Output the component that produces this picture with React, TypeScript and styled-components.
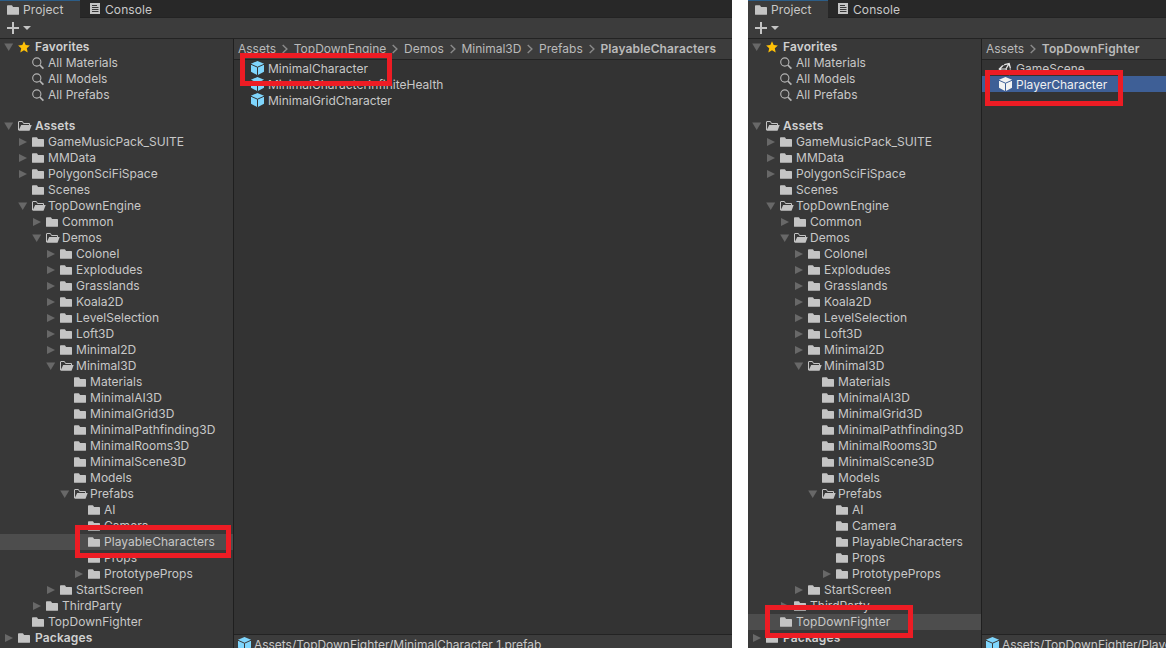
import React from 'react';
import styled, { createGlobalStyle, css } from 'styled-components';
import { FaUnity } from 'react-icons/fa';

const GlobalStyle = createGlobalStyle`
  * { box-sizing: border-box; }
  html, body { margin: 0; background: #fff; overflow: hidden; }
`;

const Page = styled.div`
  display: flex;
  gap: 16px;
  width: 1166px;
  height: 648px;
  overflow: hidden;
  background: #fff;
  color: #c8c8c8;
  font: 400 12px/16px Inter, 'Liberation Sans', sans-serif;
  letter-spacing: 0.04px;
  white-space: nowrap;
`;

const EditorWindow = styled.section<{ $width: number }>`
  position: relative;
  display: flex;
  flex-direction: column;
  flex: none;
  width: ${(p) => p.$width}px;
  height: 648px;
  overflow: hidden;
  background: #383838;
`;

const TabBar = styled.nav`
  display: flex;
  flex: none;
  height: 18px;
  background: #282828;
  border-bottom: 1px solid #232323;
  letter-spacing: 0.1px;
`;

const Tab = styled.div<{ $active?: boolean }>`
  display: flex;
  align-items: center;
  gap: 4px;
  height: 18px;
  padding-top: 2px;
  ${(p) =>
    p.$active
      ? css`
          width: 80px;
          padding-left: 7px;
          background: #3c3c3c;
          box-shadow: inset 0 1px #2c5d87;
        `
      : css`
          padding-left: 10px;
        `}
`;

const Toolbar = styled.div`
  display: flex;
  align-items: center;
  flex: none;
  height: 21px;
  padding: 0 0 0 7px;
  gap: 4px;
  background: #3c3c3c;
  border-bottom: 1px solid #232323;
`;

const Body = styled.div`
  display: flex;
  flex: 1;
  min-height: 0;
`;

const Tree = styled.div`
  flex: none;
  width: 234px;
  overflow: hidden;
  background: #383838;
  border-right: 1px solid #1f1f1f;
`;

const TreeGroup = styled.div`
  & + & { margin-top: 15px; }
`;

const TreeRow = styled.div<{ $depth: number; $selected?: boolean; $bold?: boolean }>`
  display: flex;
  align-items: center;
  height: 16px;
  padding-left: ${(p) => 4 + p.$depth * 14}px;
  background: ${(p) => (p.$selected ? '#4d4d4d' : 'transparent')};
  ${(p) =>
    p.$bold &&
    css`
      font-weight: 600;
      letter-spacing: 0.12px;
      color: #d0d0d0;
    `}
`;

const ArrowSlot = styled.span`
  display: flex;
  width: 14px;
`;

const IconSlot = styled.span<{ $wide?: boolean }>`
  display: flex;
  width: ${(p) => (p.$wide ? 17 : 16)}px;
`;

const Content = styled.main`
  display: flex;
  flex-direction: column;
  flex: 1;
  min-width: 0;
  background: #333333;
`;

const Breadcrumbs = styled.div`
  display: flex;
  align-items: center;
  flex: none;
  height: 21px;
  padding-left: 4px;
  background: #3c3c3c;
  border-bottom: 1px solid #232323;
  color: #bababa;
  letter-spacing: 0;
`;

const Crumb = styled.span<{ $current?: boolean }>`
  ${(p) =>
    p.$current &&
    css`
      font-weight: 600;
      letter-spacing: 0.13px;
    `}
`;

const CrumbArrow = styled.span`
  display: flex;
  justify-content: center;
  width: 17.7px;
`;

const FileList = styled.div`
  flex: 1;
  min-height: 0;
`;

const FileRow = styled.div<{ $selected?: boolean }>`
  display: flex;
  align-items: center;
  height: 16px;
  padding: 1px 0 0 16px;
  gap: 3px;
  letter-spacing: 0;
  color: ${(p) => (p.$selected ? '#f0f0f0' : '#c8c8c8')};
  background: ${(p) => (p.$selected ? '#3e5f96' : 'transparent')};
`;

const FileName = styled.span`
  padding-top: 1px;
`;

const StatusBar = styled.footer`
  display: flex;
  align-items: flex-start;
  flex: none;
  height: 14px;
  padding: 2px 0 0 3px;
  gap: 2px;
  overflow: hidden;
  background: #3c3c3c;
  border-top: 1px solid #232323;
  letter-spacing: -0.03px;
`;

const Highlight = styled.div<{ $x: number; $y: number; $w: number; $h: number }>`
  position: absolute;
  left: ${(p) => p.$x}px;
  top: ${(p) => p.$y}px;
  width: ${(p) => p.$w}px;
  height: ${(p) => p.$h}px;
  border: 5px solid #ed1c24;
`;

const Glyph = styled.svg`
  display: block;
  flex: none;
`;

const ConsoleGlyph = styled(Glyph)`
  margin: 0 1px 3px 0;
`;

const SceneGlyph = styled(FaUnity)`
  flex: none;
  width: 15px;
  height: 14px;
  color: #e4e4e4;
`;

const FolderIcon = () => (
  <Glyph width="12" height="10" viewBox="0 0 12 10" fill="#c4c4c4">
    <path d="M0 1Q0 .3.8.3H4.6Q5.2.3 5.5.9L6 2H11.3Q12 2 12 2.7V9.2Q12 9.8 11.3 9.8H.7Q0 9.8 0 9.2Z" />
  </Glyph>
);

const OpenFolderIcon = () => (
  <Glyph width="14" height="10" viewBox="0 0 14 10" fill="none">
    <path d="M.5 9V.9Q.5.5 1 .5H4.4L5.5 2.5H11.5V4" stroke="#c4c4c4" />
    <path d="M3.2 4H13.7L11.5 9.8H.4Z" fill="#c4c4c4" />
  </Glyph>
);

const Foldout = ({ open }: { open?: boolean }) => (
  <Glyph width="10" height="10" viewBox="0 0 10 10" fill="#686868">
    <path d={open ? 'M.2 1.5H9.2L4.7 9Z' : 'M1 1V9L9 5Z'} />
  </Glyph>
);

const StarIcon = () => (
  <Glyph width="12" height="12" viewBox="0 0 12 12" fill="#ffc107">
    <path d="M6 .2L7.7 4.1L11.9 4.5L8.8 7.3L9.7 11.5L6 9.3L2.3 11.5L3.2 7.3L.1 4.5L4.3 4.1Z" />
  </Glyph>
);

const SearchIcon = () => (
  <Glyph width="13" height="13" viewBox="0 0 13 13" fill="none" stroke="#b4b4b4">
    <circle cx="4.8" cy="5" r="4.1" strokeWidth="1.1" />
    <path d="M7.8 8L11.4 11.6" strokeWidth="1.7" />
  </Glyph>
);

const ConsoleIcon = () => (
  <ConsoleGlyph width="10" height="11" viewBox="0 0 10 11">
    <path d="M0 0H10V11H0Z" fill="#c4c4c4" />
    <path d="M2 2.5H7M2 4.5H8.5M2 6.5H8.5M2 8.5H8.5" stroke="#383838" />
  </ConsoleGlyph>
);

const PlusIcon = () => (
  <Glyph width="12" height="12" viewBox="0 0 12 12" stroke="#c4c4c4" strokeWidth="2">
    <path d="M6 0V12M0 6H12" />
  </Glyph>
);

const CaretIcon = () => (
  <Glyph width="8" height="4" viewBox="0 0 8 4" fill="#c4c4c4">
    <path d="M0 0H8L4 4Z" />
  </Glyph>
);

const ChevronIcon = () => (
  <Glyph width="6" height="10" viewBox="0 0 6 10" fill="none" stroke="#8a8a8a" strokeWidth="1.4">
    <path d="M.7 1L4.9 5L.7 9" />
  </Glyph>
);

const CubeIcon = ({ fill = '#7fd6fd', line = '#333333' }: { fill?: string; line?: string }) => (
  <Glyph width="15" height="15" viewBox="0 0 15 15">
    <path d="M7.5 0L14 2.7V10.7L7.5 14.2L1 10.7V2.7Z" fill={fill} />
    <path d="M1 3.3L7.5 6.2L14 3.3M7.5 6.2V14" stroke={line} strokeWidth="1" fill="none" />
  </Glyph>
);

type State = 'open' | 'closed' | 'leaf';
type Node = [label: string, depth: number, state: State];

const assets: Node[] = [
  ['Assets', 0, 'open'],
  ['GameMusicPack_SUITE', 1, 'closed'],
  ['MMData', 1, 'closed'],
  ['PolygonSciFiSpace', 1, 'closed'],
  ['Scenes', 1, 'leaf'],
  ['TopDownEngine', 1, 'open'],
  ['Common', 2, 'closed'],
  ['Demos', 2, 'open'],
  ['Colonel', 3, 'closed'],
  ['Explodudes', 3, 'closed'],
  ['Grasslands', 3, 'closed'],
  ['Koala2D', 3, 'closed'],
  ['LevelSelection', 3, 'closed'],
  ['Loft3D', 3, 'closed'],
  ['Minimal2D', 3, 'closed'],
  ['Minimal3D', 3, 'open'],
  ['Materials', 4, 'leaf'],
  ['MinimalAI3D', 4, 'leaf'],
  ['MinimalGrid3D', 4, 'leaf'],
  ['MinimalPathfinding3D', 4, 'leaf'],
  ['MinimalRooms3D', 4, 'leaf'],
  ['MinimalScene3D', 4, 'leaf'],
  ['Models', 4, 'leaf'],
  ['Prefabs', 4, 'open'],
  ['AI', 5, 'leaf'],
  ['Camera', 5, 'leaf'],
  ['PlayableCharacters', 5, 'leaf'],
  ['Props', 5, 'leaf'],
  ['PrototypeProps', 5, 'closed'],
  ['StartScreen', 3, 'closed'],
  ['ThirdParty', 2, 'closed'],
  ['TopDownFighter', 1, 'leaf'],
  ['Packages', 0, 'closed'],
];

const ProjectTree = ({ selected }: { selected: string }) => (
  <Tree>
    <TreeGroup>
      <TreeRow $depth={0} $bold>
        <ArrowSlot><Foldout open /></ArrowSlot>
        <IconSlot $wide><StarIcon /></IconSlot>
        Favorites
      </TreeRow>
      {['All Materials', 'All Models', 'All Prefabs'].map((label) => (
        <TreeRow key={label} $depth={1}>
          <ArrowSlot />
          <IconSlot><SearchIcon /></IconSlot>
          {label}
        </TreeRow>
      ))}
    </TreeGroup>
    <TreeGroup>
      {assets.map(([label, depth, state]) => (
        <TreeRow key={label} $depth={depth} $bold={depth === 0} $selected={label === selected}>
          <ArrowSlot>{state !== 'leaf' && <Foldout open={state === 'open'} />}</ArrowSlot>
          <IconSlot $wide={depth === 0}>{state === 'open' ? <OpenFolderIcon /> : <FolderIcon />}</IconSlot>
          {label}
        </TreeRow>
      ))}
    </TreeGroup>
  </Tree>
);

type FileItem = { name: string; kind: 'prefab' | 'scene'; selected?: boolean };

type ProjectWindowProps = {
  width: number;
  folder: string;
  path: string[];
  files: FileItem[];
  status: string;
  children?: React.ReactNode;
};

const ProjectWindow = ({ width, folder, path, files, status, children }: ProjectWindowProps) => (
  <EditorWindow $width={width}>
    <TabBar>
      <Tab $active><FolderIcon />Project</Tab>
      <Tab><ConsoleIcon />Console</Tab>
    </TabBar>
    <Toolbar><PlusIcon /><CaretIcon /></Toolbar>
    <Body>
      <ProjectTree selected={folder} />
      <Content>
        <Breadcrumbs>
          {path.map((part, i) => (
            <React.Fragment key={part}>
              {i > 0 && <CrumbArrow><ChevronIcon /></CrumbArrow>}
              <Crumb $current={i === path.length - 1}>{part}</Crumb>
            </React.Fragment>
          ))}
        </Breadcrumbs>
        <FileList>
          {files.map((file) => (
            <FileRow key={file.name} $selected={file.selected}>
              {file.kind === 'scene' ? (
                <SceneGlyph />
              ) : file.selected ? (
                <CubeIcon fill="#f2f2f2" line="#3e5f96" />
              ) : (
                <CubeIcon />
              )}
              <FileName>{file.name}</FileName>
            </FileRow>
          ))}
        </FileList>
        <StatusBar><CubeIcon line="#3c3c3c" />{status}</StatusBar>
      </Content>
    </Body>
    {children}
  </EditorWindow>
);

export default function App() {
  return (
    <>
      <GlobalStyle />
      <Page>
        <ProjectWindow
          width={732}
          folder="PlayableCharacters"
          path={['Assets', 'TopDownEngine', 'Demos', 'Minimal3D', 'Prefabs', 'PlayableCharacters']}
          files={[
            { name: 'MinimalCharacter', kind: 'prefab' },
            { name: 'MinimalCharacterInfiniteHealth', kind: 'prefab' },
            { name: 'MinimalGridCharacter', kind: 'prefab' },
          ]}
          status="Assets/TopDownFighter/MinimalCharacter 1.prefab"
        >
          <Highlight $x={240} $y={53} $w={152} $h={33} />
          <Highlight $x={75} $y={525} $w={156} $h={33} />
        </ProjectWindow>
        <ProjectWindow
          width={418}
          folder="TopDownFighter"
          path={['Assets', 'TopDownFighter']}
          files={[
            { name: 'GameScene', kind: 'scene' },
            { name: 'PlayerCharacter', kind: 'prefab', selected: true },
          ]}
          status="Assets/TopDownFighter/PlayerCharacter.prefab"
        >
          <Highlight $x={237} $y={70} $w={138} $h={36} />
          <Highlight $x={17} $y={605} $w={148} $h={33} />
        </ProjectWindow>
      </Page>
    </>
  );
}
